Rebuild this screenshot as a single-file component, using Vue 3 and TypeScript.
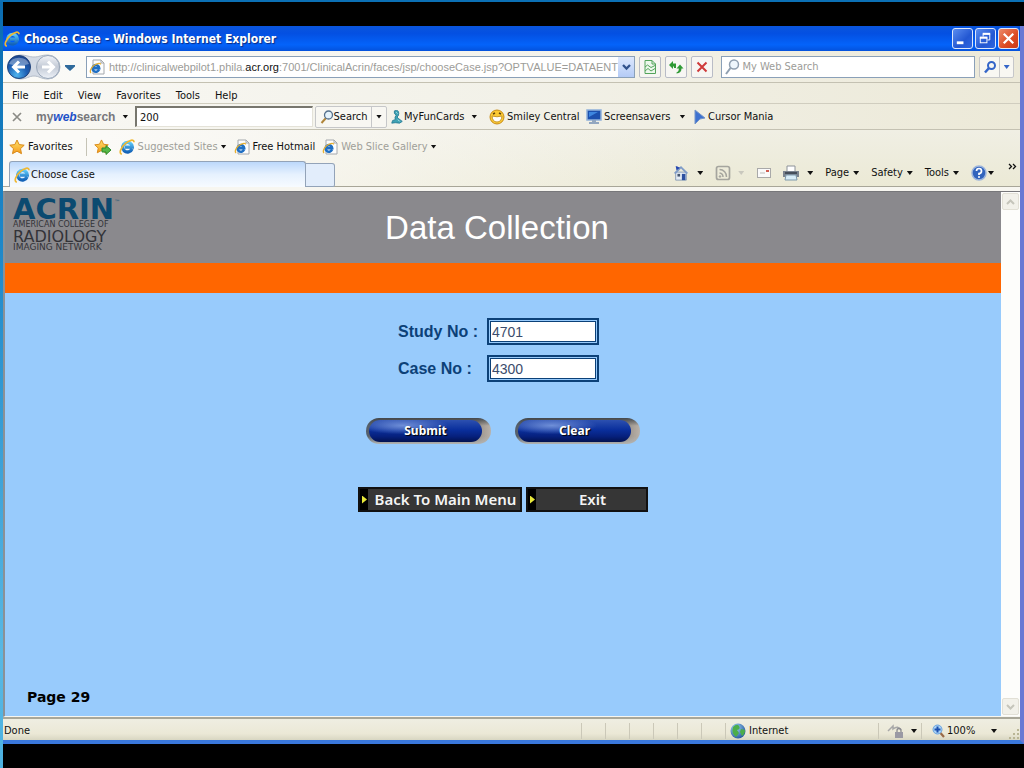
<script setup lang="ts">
import { ref } from 'vue'

const studyNo = ref('4701')
const caseNo = ref('4300')
const toolbarQuery = ref('200')
const menus: string[] = ['File', 'Edit', 'View', 'Favorites', 'Tools', 'Help']

function clearForm(): void {
  studyNo.value = ''
  caseNo.value = ''
}
</script>

<template>
  <div class="screen">
    <svg class="defs" width="0" height="0" aria-hidden="true">
      <defs>
        <linearGradient id="ieBlue" x1="0" y1="0" x2="0" y2="1">
          <stop offset="0" stop-color="#5cc8f8" />
          <stop offset="1" stop-color="#1463b8" />
        </linearGradient>
        <radialGradient id="ball" cx="0.4" cy="0.85" r="0.9">
          <stop offset="0" stop-color="#4fb4ee" />
          <stop offset="0.5" stop-color="#1c5fb4" />
          <stop offset="1" stop-color="#1b3f86" />
        </radialGradient>
        <linearGradient id="ballOff" x1="0" y1="0" x2="0" y2="1">
          <stop offset="0" stop-color="#f2f4f8" />
          <stop offset="0.5" stop-color="#c3cad6" />
          <stop offset="1" stop-color="#eef2f8" />
        </linearGradient>
        <linearGradient id="gold" x1="0" y1="0" x2="0" y2="1">
          <stop offset="0" stop-color="#ffe36a" />
          <stop offset="1" stop-color="#f59a1c" />
        </linearGradient>
        <radialGradient id="globe" cx="0.35" cy="0.3" r="0.8">
          <stop offset="0" stop-color="#9fd4f2" />
          <stop offset="1" stop-color="#1e4f9c" />
        </radialGradient>
        <symbol id="ie" viewBox="0 0 16 16">
          <path d="M13 9.9A4.8 4.8 0 1 1 13.3 8.100H6" fill="none" stroke="url(#ieBlue)" stroke-width="3.4" />
          <path d="M3 15C-0.5 15 1.5 8.5 6.5 4.4C10 1.4 15 -0.4 15 3.2" fill="none" stroke="#f0b832" stroke-width="1.7" />
        </symbol>
        <symbol id="iePage" viewBox="0 0 16 16">
          <path d="M4 1H12L15 4V15H4Z" fill="#fdfdfd" stroke="#a4a8ad" />
          <path d="M12 1V4H15" fill="none" stroke="#a4a8ad" />
          <path d="M10 10.6A3.3 3.3 0 1 1 10.2 9.3H5" fill="none" stroke="#1f6fc4" stroke-width="2.6" />
          <path d="M2 14C0 12 3 7.500 6 5.800C9 4 11.500 3.800 11.500 5.500" fill="none" stroke="#e8b030" stroke-width="1.3" />
        </symbol>
        <symbol id="star" viewBox="0 0 16 16">
          <path d="M8 1L10.2 5.6L15.2 6.2L11.5 9.7L12.5 14.7L8 12.2L3.5 14.7L4.5 9.7L0.8 6.2L5.8 5.6Z" fill="url(#gold)" stroke="#d98a1a" />
        </symbol>
      </defs>
    </svg>

    <div class="band"></div>
    <div class="frame">
      <header class="titlebar">
        <svg class="i16" aria-hidden="true"><use href="#ie" /></svg>
        <h1>Choose Case - Windows Internet Explorer</h1>
        <div class="winbtns">
          <button type="button" aria-label="Minimize">
            <svg viewBox="0 0 20 20"><rect x="4" y="13" width="7" height="3" fill="#fff" /></svg>
          </button>
          <button type="button" aria-label="Restore">
            <svg viewBox="0 0 20 20" fill="none" stroke="#fff"><path d="M7.500 8V5.500H14.500V11.500H12" /><path d="M7 5H15" stroke-width="2" /><rect x="4.500" y="9.500" width="7" height="5" /><path d="M4 9H12" stroke-width="2" /></svg>
          </button>
          <button type="button" class="close" aria-label="Close">
            <svg viewBox="0 0 20 20"><path d="M5 5L15 15M15 5L5 15" stroke="#fff" stroke-width="2.300" /></svg>
          </button>
        </div>
      </header>

      <nav class="navrow">
        <svg class="travel" viewBox="0 0 58 28" aria-hidden="true">
          <path d="M15 2C22 2 24 4 29 4S36 2 43 2A12 12 0 0 1 43 26C36 26 34 23 29 23S22 26 15 26A12 12 0 0 1 15 2Z" fill="#d3dae4" stroke="#b4bdc9" />
          <circle cx="14" cy="14" r="11.500" fill="url(#ball)" stroke="#23457c" />
          <path d="M4 11A10.500 9 0 0 1 24 11Q14 14 4 11Z" fill="#fff" opacity="0.35" />
          <path d="M20 14H9M14 8.500L8.500 14L14 19.500" fill="none" stroke="#fff" stroke-width="3" />
          <circle cx="43" cy="14" r="11.500" fill="url(#ballOff)" stroke="#98a6b8" />
          <path d="M37 14H48M43 8.500L48.500 14L43 19.500" fill="none" stroke="#fff" stroke-width="3" />
        </svg>
        <svg class="down" viewBox="0 0 10 7" aria-hidden="true"><path d="M0 1H10V2.500L5 7L0 2.500Z" fill="#2f6a9c" /></svg>
        <div class="address">
          <svg class="i16" aria-hidden="true"><use href="#iePage" /></svg>
          <span class="url">http://clinicalwebpilot1.phila.<b>acr.org</b>:7001/ClinicalAcrin/faces/jsp/chooseCase.jsp?OPTVALUE=DATAENTRY</span>
          <input type="text" class="urlbox" aria-label="Address" />
          <button type="button" class="drop" aria-label="Show address list">
            <svg viewBox="0 0 9 7"><path d="M1 1L4.500 4.500L8 1" fill="none" stroke="#31528c" stroke-width="2.300" /></svg>
          </button>
        </div>
        <button type="button" class="sq" aria-label="Compatibility view">
          <svg viewBox="0 0 16 16" fill="none" stroke="#54a45c"><path d="M3 1.500H10L13.500 5V14.500H3Z" fill="#edf7ec" /><path d="M10 1.500V5H13.500M3 8L5.500 6L9 8.500L13 6.500M3 12L6 9.500L9 12L13 9.500" /></svg>
        </button>
        <button type="button" class="sq" aria-label="Refresh">
          <svg viewBox="0 0 16 16" fill="#2f9a35"><path d="M1 6L5 2V4.500H8V9H6V7.500H5V10Z" /><path d="M15.500 9.500L12 5.500L8.500 9.500H10.800C10.800 11.500 10.500 12.500 8.500 13.500V14.500C12 14 13.500 12.500 13.500 9.500Z" /></svg>
        </button>
        <button type="button" class="sq" aria-label="Stop">
          <svg viewBox="0 0 16 16"><path d="M3.500 3.500L12.500 12.500M12.500 3.500L3.500 12.500" stroke="#cf3a3a" stroke-width="2" /></svg>
        </button>
        <div class="search">
          <svg class="i16" viewBox="0 0 16 16" fill="#eef6fc" stroke="#8f9fb0" aria-hidden="true"><circle cx="10" cy="5.500" r="4.500" stroke-width="1.500" /><path d="M6.500 9L2 15" stroke-width="2" /></svg>
          <input type="text" placeholder="My Web Search" aria-label="My Web Search" />
        </div>
        <div class="split go">
          <button type="button" aria-label="Search">
            <svg class="i14" viewBox="0 0 14 14" fill="none" stroke="#3465c8"><circle cx="8.500" cy="5.500" r="3.500" stroke-width="2" /><path d="M6 8L2 12.500" stroke-width="2.500" /></svg>
          </button>
          <button type="button" aria-label="Search options"><i class="caret blue"></i></button>
        </div>
      </nav>

      <div class="menubar">
        <button v-for="m in menus" :key="m" type="button">{{ m }}</button>
      </div>

      <div class="toolbar">
        <button type="button" class="xbtn" aria-label="Close toolbar">
          <svg viewBox="0 0 10 10"><path d="M1 1L9 9M9 1L1 9" stroke="#8b8b86" stroke-width="1.700" /></svg>
        </button>
        <button type="button" class="brand"><span>my<em>web</em>search</span><i class="caret"></i></button>
        <input v-model="toolbarQuery" type="text" class="tbox" aria-label="Toolbar search" />
        <div class="split find">
          <button type="button"><svg class="i14" viewBox="0 0 14 14" fill="#e4f2fb" aria-hidden="true"><path d="M6 8L1.500 13" stroke="#b0853a" stroke-width="2" /><circle cx="8.500" cy="5" r="4" stroke="#55708c" stroke-width="1.300" /></svg>Search</button>
          <button type="button" aria-label="Search options"><i class="caret"></i></button>
        </div>
        <button type="button" class="tool fun">
          <svg class="i14" viewBox="0 0 14 16" aria-hidden="true"><path d="M4 1Q9 -1 9 4Q9 7 7 8L9 10L13 13L10 15L5 14.500L1 15L2 12L5 11Q4 8 6 6Q3 4 4 1Z" fill="#3fa3b4" stroke="#287c96" /><path d="M6 2.500L7.500 4M8 11L10 13" stroke="#c4eaf0" /></svg>MyFunCards<i class="caret"></i></button>
        <button type="button" class="tool smile">
          <svg class="i16" viewBox="0 0 16 16" aria-hidden="true"><circle cx="8" cy="8" r="7" fill="#fbc934" stroke="#c98d18" /><path d="M4 5L6 4M10 4L12 5" stroke="#60410a" stroke-width="1.500" /><path d="M3 7Q8 8.500 13 7Q12.500 13 8 13T3 7Z" fill="#fff" stroke="#c89828" /></svg>Smiley Central</button>
        <button type="button" class="tool saver">
          <svg class="i16" viewBox="0 0 16 16" aria-hidden="true"><rect x="1" y="1" width="14" height="10" fill="#1c50ae" stroke="#8fb0da" stroke-width="1.500" /><path d="M3 3H12L3 8Z" fill="#3d86df" /><path d="M6 11H10V13H13V15H3V13H6Z" fill="#93a7c0" /></svg>Screensavers<i class="caret"></i></button>
        <button type="button" class="tool">
          <svg class="i12" viewBox="0 0 12 16" aria-hidden="true"><path d="M1 1L11 9L6 10L1 15Z" fill="#3e72d0" stroke="#7595c8" /></svg>Cursor Mania</button>
      </div>

      <div class="lower">
        <div class="favbar">
          <button type="button"><svg class="i16" aria-hidden="true"><use href="#star" /></svg>Favorites</button>
          <i class="rule"></i>
          <button type="button" aria-label="Add to Favorites Bar">
            <svg class="i18" viewBox="0 0 18 16"><use href="#star" width="15" height="15" /><path d="M8 9H12V6.500L17 11L12 15.500V13H8Z" fill="#57b847" stroke="#2f8a2b" /></svg>
          </button>
          <button type="button" class="dim"><svg class="i16" aria-hidden="true"><use href="#ie" /></svg>Suggested Sites<i class="caret"></i></button>
          <a href="#"><svg class="i16" aria-hidden="true"><use href="#iePage" /></svg>Free Hotmail</a>
          <button type="button" class="dim"><svg class="i16" aria-hidden="true"><use href="#iePage" /></svg>Web Slice Gallery<i class="caret"></i></button>
        </div>

        <div class="tabrow">
          <button type="button" class="tab"><svg class="i16" aria-hidden="true"><use href="#ie" /></svg>Choose Case</button>
          <button type="button" class="newtab" aria-label="New Tab"></button>
          <div class="cmds">
            <button type="button" class="wide" aria-label="Home">
              <svg class="i18" viewBox="0 0 18 18"><path d="M3 8H15V17H3Z" fill="#e3ebf4" stroke="#8498b2" /><path d="M1 9L4 6V1L7 3L9 1L17 9L15 10L9 4L3 10Z" fill="#7f9cc8" /><path d="M3 1L8 3L4 6Z" fill="#2546b0" /><path d="M10 10H14V17H10Z" fill="#2c50a0" /><path d="M5 10H8V13H5Z" fill="#45556f" /></svg><i class="caret"></i></button>
            <button type="button" class="wide" aria-label="Feeds">
              <svg class="i16" viewBox="0 0 16 16" fill="none" stroke="#a5a59e"><rect x="1.500" y="1.500" width="13" height="13" rx="2" stroke-width="1.700" /><path d="M4.500 8A4 4 0 0 1 8 12M4.500 4.500A7 7 0 0 1 11.500 12" stroke-width="1.500" /><circle cx="5" cy="11.500" r="0.800" fill="#a5a59e" /></svg><i class="caret pale"></i></button>
            <button type="button" class="mail" aria-label="Read mail">
              <svg class="i16" viewBox="0 0 16 16"><rect x="1.500" y="3.500" width="13" height="9" fill="#fafafa" stroke="#a9a9a9" /><rect x="10" y="5" width="3" height="2" fill="#cf5d53" /><path d="M4 8H9" stroke="#bbb" /></svg>
            </button>
            <button type="button" class="wide" aria-label="Print">
              <svg class="i18" viewBox="0 0 18 16"><path d="M5 1H13V7H5Z" fill="#fff" stroke="#8d9299" /><path d="M1 6H17V12H1Z" fill="#7b848f" /><path d="M3 7H15V9H3Z" fill="#454e5a" /><path d="M4 10H14L15 15H3Z" fill="#d8edf8" stroke="#7e99ab" /></svg><i class="caret"></i></button>
            <button type="button" class="txt">Page<i class="caret"></i></button>
            <button type="button" class="txt">Safety<i class="caret"></i></button>
            <button type="button" class="txt">Tools<i class="caret"></i></button>
            <button type="button" class="help" aria-label="Help">
              <svg class="i16" viewBox="0 0 16 16"><circle cx="8" cy="8" r="7" fill="#3264bd" stroke="#9db5dc" stroke-width="1.500" /><path d="M5.500 6A2.500 2.500 0 1 1 8 8.500V10" fill="none" stroke="#fff" stroke-width="1.700" /><circle cx="8" cy="12" r="1" fill="#fff" /></svg><i class="caret"></i></button>
            <button type="button" class="more" aria-label="More commands">
              <svg viewBox="0 0 9 7" fill="none" stroke="#111" stroke-width="1.300"><path d="M1 1L3.500 3.500L1 6M5 1L7.500 3.500L5 6" /></svg>
            </button>
          </div>
        </div>
      </div>

      <div class="viewport">
        <main class="page">
          <div class="banner">
            <div class="logo">
              <div class="acrin">ACRIN<sup>™</sup></div>
              <div class="l2">American College of</div>
              <div class="l3">Radiology</div>
              <div class="l4">Imaging Network</div>
            </div>
            <h2>Data Collection</h2>
          </div>
          <div class="orange"></div>
          <form @submit.prevent>
            <div class="fields">
              <label for="study">Study No :</label>
              <input id="study" v-model="studyNo" type="text" />
              <label for="case">Case No :</label>
              <input id="case" v-model="caseNo" type="text" />
            </div>
            <div class="pills">
              <button type="submit"><span>Submit</span></button>
              <button type="button" @click="clearForm"><span>Clear</span></button>
            </div>
            <div class="links">
              <a href="#" class="back"><i></i><span>Back To Main Menu</span></a>
              <a href="#" class="exit"><i></i><span>Exit</span></a>
            </div>
          </form>
          <p class="pageno">Page 29</p>
        </main>
        <div class="scroll">
          <button type="button" aria-label="Scroll up"><svg viewBox="0 0 9 6"><path d="M1 5L4.500 1.500L8 5" fill="none" stroke="#c5c5bb" stroke-width="2" /></svg></button>
          <button type="button" aria-label="Scroll down"><svg viewBox="0 0 9 6"><path d="M1 1L4.500 4.500L8 1" fill="none" stroke="#c5c5bb" stroke-width="2" /></svg></button>
        </div>
      </div>

      <footer class="status">
        <span class="done">Done</span>
        <i v-for="n in 6" :key="n" class="cell"></i>
        <div class="zone">
          <svg class="i16" viewBox="0 0 16 16" aria-hidden="true"><circle cx="8" cy="8" r="7.500" fill="url(#globe)" /><path d="M3 4Q7 0 9 3T7 7L9 10L6 14Q1 10 3 4ZM11 6L15 7Q15 11 12 13L10 9Z" fill="#4cae4a" /></svg>Internet</div>
        <button type="button" class="lock" aria-label="Protected mode">
          <svg class="i18" viewBox="0 0 18 16"><path d="M1 8L6 3V6Q11 2 14 7" fill="none" stroke="#a8a8a8" stroke-width="1.500" /><rect x="8" y="9" width="8" height="6" fill="#9a99a4" /><path d="M10 9V7.500A2 2 0 0 1 14 7.500V9" fill="none" stroke="#8b8b90" stroke-width="1.300" /></svg><i class="caret"></i></button>
        <button type="button" class="zoom">
          <svg class="i14" viewBox="0 0 14 14" aria-hidden="true"><path d="M8.500 9L12 13" stroke="#9a6a48" stroke-width="2.200" /><circle cx="5.500" cy="5.500" r="4.500" fill="#a8d2f6" stroke="#6aa2de" /><path d="M5.500 2.500V8.500M2.500 5.500H8.500" stroke="#1c4fae" stroke-width="2" /></svg>100%<i class="caret"></i></button>
        <svg class="grip" viewBox="0 0 12 12" fill="#b9b595" aria-hidden="true"><rect x="9" y="1" width="2" height="2" /><rect x="5" y="5" width="2" height="2" /><rect x="9" y="5" width="2" height="2" /><rect x="1" y="9" width="2" height="2" /><rect x="5" y="9" width="2" height="2" /><rect x="9" y="9" width="2" height="2" /></svg>
      </footer>
    </div>
    <div class="band"></div>
  </div>
</template>

<style>
body {
  background: #000;
}
</style>

<style scoped>
.screen {
  box-sizing: border-box;
  min-height: 100vh;
  display: flex;
  flex-direction: column;
  padding-left: 3px;
  border-top: 2px solid #0b70b5;
  background: linear-gradient(#0b6cb0, #1c86c8 30%, #58b8e4 85%, #4db1e0) left / 3px 100% no-repeat, #000;
  font: 11px/14px "DejaVu Sans Condensed", "DejaVu Sans", sans-serif;
  color: #111;
}
.screen *,
.screen *::before {
  box-sizing: border-box;
}
.defs {
  position: absolute;
}
.band {
  height: 24px;
  background: #000;
}
button,
input {
  font: inherit;
  color: inherit;
  margin: 0;
  padding: 0;
  border: 0;
  background: none;
  min-width: 0;
}
button,
a {
  display: flex;
  align-items: center;
  white-space: nowrap;
  color: inherit;
  text-decoration: none;
}
svg {
  flex: none;
  display: block;
}
.i12 { width: 12px; height: 16px; }
.i14 { width: 14px; height: 14px; }
.i16 { width: 16px; height: 16px; }
.i18 { width: 18px; height: 16px; }
.caret {
  flex: none;
  width: 6px;
  height: 4px;
  background: #111;
  clip-path: polygon(0 0, 100% 0, 50% 100%);
}
.caret.blue { background: #3465c8; }
.caret.pale { background: #c9c8be; }

.frame {
  flex: 1;
  display: flex;
  flex-direction: column;
  background: #f0efe4;
  border-right: 4px solid #6a78d4;
  border-bottom: 4px solid #3a78dc;
}
.titlebar {
  display: flex;
  align-items: center;
  gap: 4px;
  height: 25px;
  padding: 0 1px 0 1px;
  color: #fff;
  background: linear-gradient(#0a55dc, #0450e2 30%, #0463fa 75%, #0452dc);
}
.titlebar h1 {
  flex: 1;
  margin: 0;
  font: bold 12px/18px "DejaVu Sans Condensed", sans-serif;
  text-shadow: 1px 1px 1px #0a2a80;
}
.winbtns {
  display: flex;
  gap: 2px;
}
.winbtns button {
  width: 21px;
  height: 21px;
  border: 1px solid #dfe8fb;
  border-radius: 3px;
  background: linear-gradient(135deg, #5b8df0, #2357d2 60%, #2f66e0);
}
.winbtns .close {
  background: linear-gradient(135deg, #ec8a6a, #dc4a22 60%, #c83a18);
}

.navrow {
  display: flex;
  align-items: center;
  height: 32px;
  padding: 1px 6px 0 2px;
  border-bottom: 1px solid #c4c1b2;
  background: linear-gradient(90deg, #fbfbf8, #f4f3ec 50%, #ece9d8);
}
.travel {
  width: 58px;
  height: 28px;
}
.down {
  width: 10px;
  height: 7px;
  margin: 0 11px 0 2px;
}
.address,
.search {
  display: flex;
  align-items: center;
  height: 22px;
  border: 1px solid #8aa0b8;
  background: #fff;
}
.address {
  position: relative;
  flex: 555 1 0;
  min-width: 0;
  margin-right: 4px;
  padding-left: 2px;
}
.url {
  flex: 1;
  margin-left: 4px;
  overflow: hidden;
  white-space: nowrap;
  font-family: "Liberation Sans", Arial, sans-serif;
  color: #9c9c98;
}
.url b {
  font-weight: normal;
  color: #111;
}
.urlbox {
  position: absolute;
  inset: 0 16px 0 20px;
}
.drop {
  width: 16px;
  height: 20px;
  justify-content: center;
  background: linear-gradient(#dde8fd, #b4cbf6);
}
.drop svg {
  width: 9px;
  height: 7px;
}
.sq {
  width: 22px;
  height: 22px;
  margin-right: 4px;
  justify-content: center;
  border: 1px solid #b9bcc6;
  border-radius: 2px;
  background: #f7f6f3;
}
.sq svg {
  width: 16px;
  height: 16px;
}
.search {
  flex: 254 1 0;
  margin: 0 4px;
  padding-left: 2px;
  gap: 2px;
}
.search input {
  flex: 1;
}
.search input::placeholder {
  color: #9c9c98;
  opacity: 1;
}
.split {
  display: flex;
  height: 22px;
  border: 1px solid #c6c7c9;
  border-radius: 2px;
  background: #f8f7f2;
}
.split button {
  justify-content: center;
}
.split button + button {
  border-left: 1px solid #c6c7c9;
}
.go { width: 35px; }
.go button { flex: 20; }
.go button + button { flex: 13; }

.menubar {
  display: flex;
  gap: 15px;
  height: 21px;
  padding: 5px 9px 0;
  background: linear-gradient(90deg, #f9f8f4, #f2f1e8 50%, #ece9d8);
  border-bottom: 1px solid #d0cdbf;
}
.toolbar {
  display: flex;
  align-items: center;
  height: 26px;
  padding-left: 9px;
  background: linear-gradient(90deg, #f9f8f4, #f2f1e8 50%, #ece9d8);
  border-bottom: 1px solid #c4c1b2;
}
.xbtn svg {
  width: 10px;
  height: 10px;
}
.brand {
  gap: 7px;
  width: 95px;
  margin: 0 4px 0 14px;
  font: bold 12px/14px "Liberation Sans", Arial, sans-serif;
  color: #77777b;
}
.brand em {
  color: #1c50c8;
}
.tbox {
  width: 178px;
  height: 21px;
  padding-left: 3px;
  border: 1px solid #e4e2d8;
  border-top: 2px solid #77766e;
  border-left: 2px solid #77766e;
  background: #fff;
}
.find {
  margin-left: 2px;
  width: 72px;
}
.find button {
  flex: 1;
}
.find button + button {
  flex: none;
  width: 15px;
}
.tool {
  gap: 2px;
}
.tool .caret { margin-left: 7px; }
.fun { width: 99px; margin-left: 3px; gap: 0; }
.smile { width: 97px; }
.saver { width: 108px; }

.lower {
  background: linear-gradient(90deg, #fbfaf7 10%, transparent 70%), linear-gradient(#f0efe4, #ebe9d4);
}
.favbar {
  display: flex;
  align-items: center;
  height: 31px;
  padding: 2px 0 0 6px;
}
.favbar button,
.favbar a {
  gap: 3px;
  margin-right: 7px;
}
.favbar .dim {
  color: #9f9f99;
}
.rule {
  width: 1px;
  height: 18px;
  margin: 0 7px 0 6px;
  background: #c5c3b6;
}
.tabrow {
  display: flex;
  align-items: flex-end;
  height: 30px;
  padding-left: 6px;
  border-bottom: 4px solid #f7f6f0;
  box-shadow: inset 0 -1px #a8a698;
}
.tab {
  width: 297px;
  height: 26px;
  padding-left: 4px;
  gap: 1px;
  border: 1px solid #93a3b8;
  border-bottom: 0;
  border-radius: 3px 3px 0 0;
  background: linear-gradient(#bcd8fb, #e6f1fe 50%, #f7fbff);
}
.newtab {
  width: 29px;
  height: 24px;
  border: 1px solid #93a3b8;
  border-left: 0;
  border-radius: 0 3px 2px 0;
  background: #e2edfb;
}
.cmds {
  display: flex;
  align-items: center;
  height: 28px;
  margin-left: auto;
  padding-right: 3px;
}
.cmds button { gap: 4px; }
.cmds .wide { gap: 7px; margin-right: 12px; }
.cmds .mail { margin-right: 10px; }
.cmds .txt { margin-right: 12px; }
.cmds .help { gap: 1px; }
.more {
  align-self: flex-start;
  margin: 4px 0 0 14px;
}
.more svg {
  width: 9px;
  height: 7px;
}

.viewport {
  flex: 1;
  display: flex;
  border-top: 1px solid #77777a;
  border-left: 2px solid #8c9196;
  border-bottom: 1px solid #f7f6f0;
}
.page {
  flex: 1;
  display: flex;
  flex-direction: column;
  background: #98cbfc;
  font-family: "Liberation Sans", Arial, sans-serif;
}
.banner {
  display: grid;
  grid-template-columns: 1fr auto 1fr;
  align-items: center;
  height: 71px;
  background: #8a898d;
}
.banner h2 {
  margin: 0 12px 0 0;
  font: 33px/38px "Liberation Sans", Arial, sans-serif;
  color: #fff;
}
.logo {
  align-self: start;
  padding: 7px 0 0 8px;
  color: #333338;
  white-space: nowrap;
  text-transform: uppercase;
}
.acrin {
  font: bold 29px/21px "DejaVu Sans", sans-serif;
  color: #0b4a70;
}
.acrin sup {
  font: 6px/6px "DejaVu Sans", sans-serif;
  vertical-align: top;
}
.l2 { font: 8px/10px "DejaVu Sans", sans-serif; }
.l3 { font: 16px/13px "DejaVu Sans", sans-serif; }
.l4 { font: 9px/9px "DejaVu Sans", sans-serif; }
.orange {
  height: 30px;
  background: #ff6600;
}
form {
  display: flex;
  flex-direction: column;
  align-items: center;
  padding-top: 25px;
}
.fields {
  display: grid;
  grid-template-columns: auto 112px;
  align-items: center;
  gap: 10px 9px;
  margin-right: 9px;
}
.fields label {
  font: bold 16px/20px "Liberation Sans", Arial, sans-serif;
  color: #0c4178;
}
.fields input {
  height: 27px;
  padding-left: 1px;
  border: 4px double #0c4178;
  background: #fff;
  background-clip: padding-box;
  font: 14px/18px "Liberation Sans", Arial, sans-serif;
  color: #3c4c6c;
  outline: 1px solid #0c4178;
  outline-offset: -2px;
}
.pills {
  display: flex;
  gap: 24px;
  margin-top: 36px;
}
.pills button {
  width: 125px;
  height: 26px;
  padding: 2px 9px 2px 3px;
  border-radius: 13px;
  background: linear-gradient(#44484c, transparent 30%, transparent 70%, #b3b4b2), linear-gradient(90deg, #56606c, #777 85%, #a49c94 93%, #b9b2aa);
}
.pills span {
  flex: 1;
  height: 22px;
  border-radius: 11px;
  background: radial-gradient(ellipse 40% 40% at 30% 25%, #6f8fd8, transparent), linear-gradient(#2c50b0, #0a2f9c 45%, #06207c 75%, #021250);
  font: bold 12px/22px "Noto Sans", sans-serif;
  color: #fff;
  text-shadow: 1px 1px 1px #000;
}
.links {
  display: flex;
  gap: 4px;
  margin-top: 43px;
}
.links a {
  height: 25px;
  border: 2px solid #111;
  background: linear-gradient(90deg, #000 8px, #363636 8px);
  font: 600 15px/18px "Noto Sans", sans-serif;
  color: #f4f4f4;
}
.links i {
  width: 5px;
  height: 8px;
  margin-left: 2px;
  background: #e8e83a;
  clip-path: polygon(0 0, 100% 50%, 0 100%);
}
.links span {
  flex: 1;
  height: 20px;
  padding-left: 4px;
  text-align: center;
}
.back { width: 164px; }
.exit { width: 122px; }
.pageno {
  margin: auto 0 10px 22px;
  font: bold 14px/18px "DejaVu Sans", sans-serif;
  color: #000;
}
.scroll {
  display: flex;
  flex-direction: column;
  justify-content: space-between;
  width: 19px;
  padding: 1px;
  background: #fdfdfb;
}
.scroll button {
  width: 17px;
  height: 17px;
  justify-content: center;
  border: 1px solid #e2e0d6;
  border-radius: 2px;
  background: #f2f1ea;
}
.scroll svg {
  width: 9px;
  height: 6px;
}

.status {
  display: flex;
  align-items: center;
  height: 23px;
  padding: 3px 0 0 1px;
  border-top: 2px solid #a9a799;
  background: linear-gradient(#efeee2, #ebe8d6 70%, #d8d6c2);
}
.done { flex: 1; }
.cell {
  width: 24px;
  height: 16px;
  border-left: 1px solid #cbc8b8;
}
.zone,
.lock,
.zoom {
  display: flex;
  align-items: center;
  height: 16px;
  border-left: 1px solid #cbc8b8;
}
.zone {
  width: 153px;
  padding-left: 4px;
  gap: 3px;
}
.lock {
  width: 43px;
  padding-left: 8px;
  gap: 6px;
}
.zoom {
  width: 87px;
  padding-left: 10px;
  gap: 1px;
}
.zoom .caret { margin-left: auto; margin-right: 11px; }
.grip {
  width: 12px;
  height: 12px;
  align-self: flex-end;
}
</style>
